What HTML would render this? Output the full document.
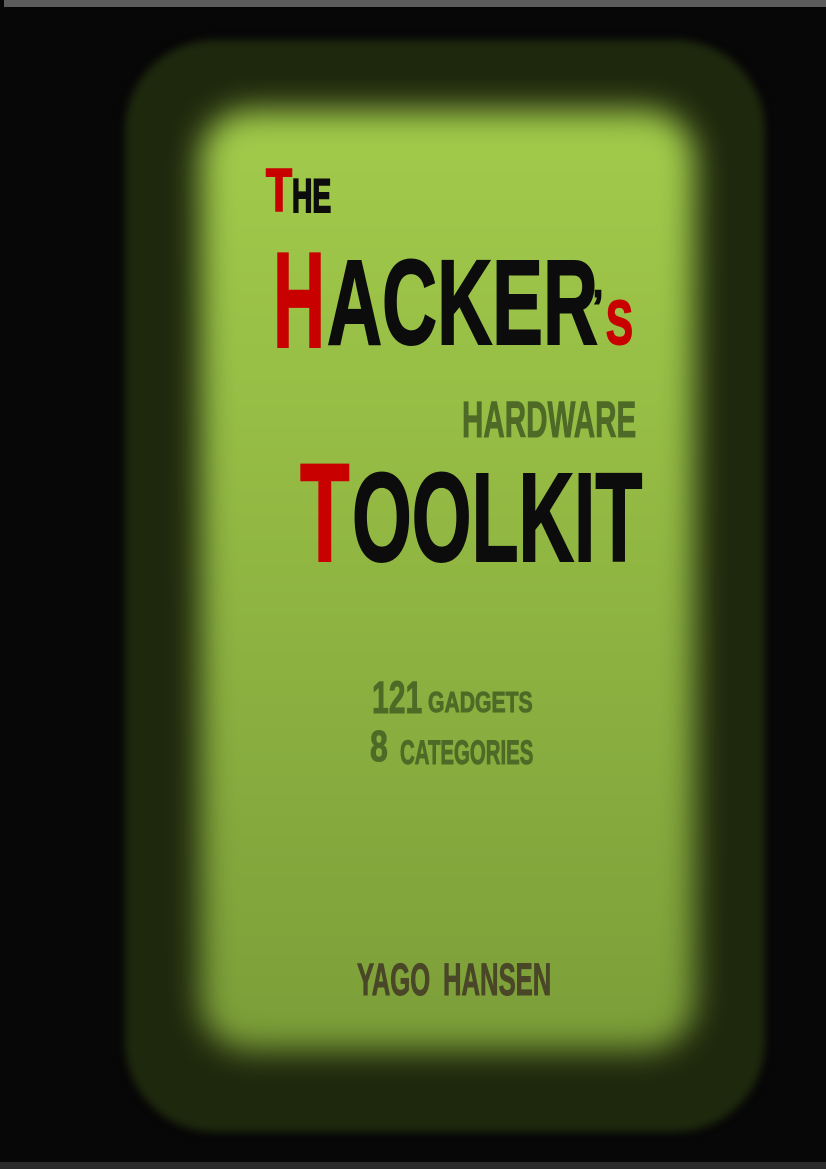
<!DOCTYPE html>
<html><head><style>
html,body{margin:0;padding:0}
body{width:826px;height:1169px;background:#070707;position:relative;overflow:hidden;font-family:"Liberation Sans",sans-serif;font-weight:bold}
.top{position:absolute;left:4px;top:0;width:822px;height:7px;background:#5c5c5c}
.bot{position:absolute;left:0;top:1162px;width:826px;height:7px;background:#2b2b2b}
.outer{position:absolute;left:125px;top:40px;width:640px;height:1092px;border-radius:90px;background:#1e280d;filter:blur(4px)}
.inner{position:absolute;left:200px;top:110px;width:495px;height:940px;border-radius:50px;background:linear-gradient(#a2cb4b,#94ba44 40%,#7c9e39);filter:blur(16px)}
.w{position:absolute;line-height:1;white-space:nowrap;transform-origin:0 0;letter-spacing:0}
.r{color:#c80000;-webkit-text-stroke:2px #c80000}.k{color:#0c0c0c;-webkit-text-stroke:2px #0c0c0c}.g{color:#4f6a26;-webkit-text-stroke:1px #4f6a26}.a{color:#4a4628;-webkit-text-stroke:1px #4a4628}
</style></head><body>
<div class="top"></div><div class="bot"></div>
<div class="outer"></div><div class="inner"></div>
<div class="w r" style="left:266px;top:161px;font-size:60px;transform:scaleX(.71)">T</div>
<div class="w k" style="left:292px;top:172px;font-size:47px;transform:scaleX(.6)">HE</div>
<div class="w r" style="left:273px;top:232px;font-size:136px;transform:scaleX(.53)">H</div>
<div class="w k" style="left:327px;top:242px;font-size:121px;transform:scaleX(.63)">ACKER</div>
<div class="w k" style="left:593px;top:284px;font-size:45px;transform:scaleX(.8)">’</div>
<div class="w r" style="left:606px;top:293px;font-size:62px;transform:scaleX(.65)">S</div>
<div class="w g" style="left:462px;top:394px;font-size:51px;transform:scaleX(.58)">HARDWARE</div>
<div class="w r" style="left:300px;top:443px;font-size:140px;transform:scaleX(.58)">T</div>
<div class="w k" style="left:352px;top:455px;font-size:126px;transform:scaleX(.61)">OOLKIT</div>
<div class="w g" style="left:372px;top:675px;font-size:45px;transform:scaleX(.67)">121</div>
<div class="w g" style="left:428px;top:689px;font-size:29px;transform:scaleX(.73)">GADGETS</div>
<div class="w g" style="left:370px;top:725px;font-size:44px;transform:scaleX(.73)">8</div>
<div class="w g" style="left:400px;top:736px;font-size:34px;transform:scaleX(.6)">CATEGORIES</div>
<div class="w a" style="left:357px;top:957px;font-size:45px;transform:scaleX(.57)">YAGO</div>
<div class="w a" style="left:443px;top:957px;font-size:45px;transform:scaleX(.57)">HANSEN</div>
</body></html>
